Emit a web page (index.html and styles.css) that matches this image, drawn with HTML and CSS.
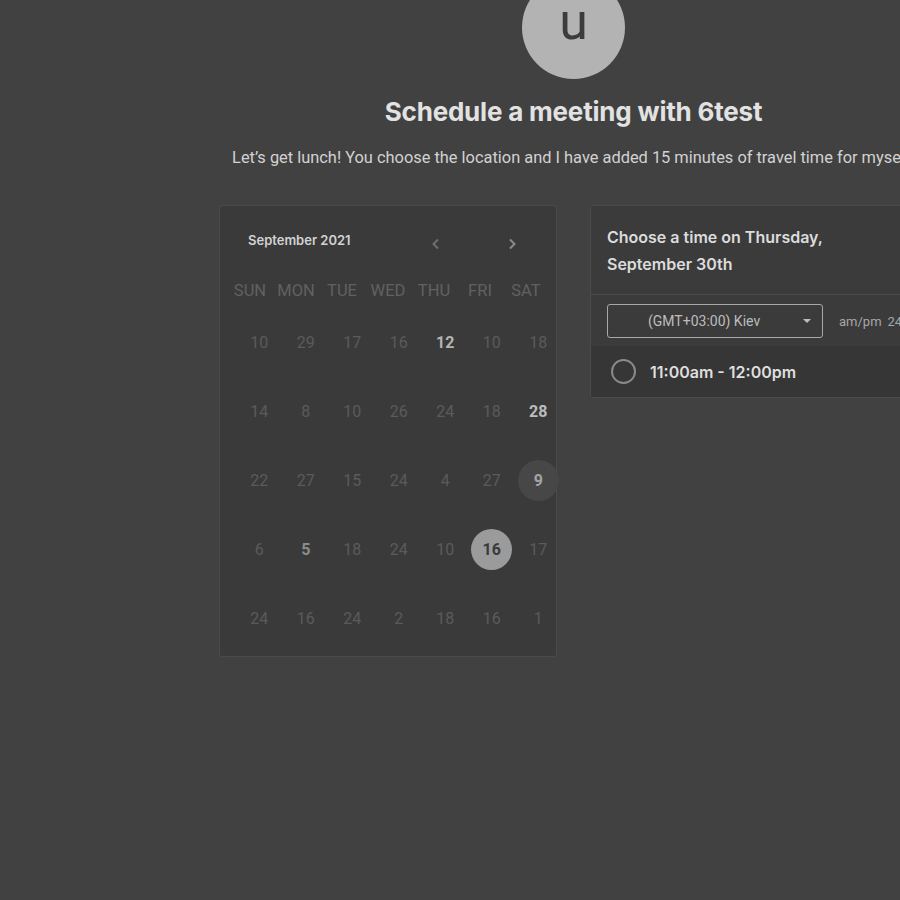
FILE: index.html
```html
<!DOCTYPE html>
<html>
<head>
<meta charset="utf-8">
<link rel="stylesheet" href="styles.css">
</head>
<body>
<div class="page">
  <div class="avatar">u</div>
  <h1 class="title">Schedule a meeting with 6test</h1>
  <p class="subtitle">Let’s get lunch! You choose the location and I have added 15 minutes of travel time for myself.</p>
  <div class="panels">
    <div class="calendar">
      <div class="cal-head">
        <span class="month">September 2021</span>
        <div class="navs">
          <svg class="nav" width="14" height="14" viewBox="0 0 14 14"><path d="M9 2.5 L4.5 7 L9 11.5" fill="none" stroke="#6e6e6e" stroke-width="2"/></svg>
          <svg class="nav" width="14" height="14" viewBox="0 0 14 14"><path d="M5 2.5 L9.5 7 L5 11.5" fill="none" stroke="#8a8a8a" stroke-width="2"/></svg>
        </div>
      </div>
      <div class="dows">
        <span>SUN</span><span>MON</span><span>TUE</span><span>WED</span><span>THU</span><span>FRI</span><span>SAT</span>
      </div>
      <div class="grid">
        <span class="d">10</span><span class="d">29</span><span class="d">17</span><span class="d">16</span><span class="d b1">12</span><span class="d">10</span><span class="d">18</span>
        <span class="d">14</span><span class="d">8</span><span class="d">10</span><span class="d">26</span><span class="d">24</span><span class="d">18</span><span class="d b2">28</span>
        <span class="d">22</span><span class="d">27</span><span class="d">15</span><span class="d">24</span><span class="d">4</span><span class="d">27</span><span class="d today"><i>9</i></span>
        <span class="d">6</span><span class="d b3">5</span><span class="d">18</span><span class="d">24</span><span class="d">10</span><span class="d sel"><i>16</i></span><span class="d">17</span>
        <span class="d">24</span><span class="d">16</span><span class="d">24</span><span class="d">2</span><span class="d">18</span><span class="d">16</span><span class="d">1</span>
      </div>
    </div>
    <div class="times">
      <div class="times-head">Choose a time on Thursday,<br>September 30th</div>
      <div class="tz-row">
        <div class="select"><span>(GMT+03:00) Kiev</span><svg class="caret" width="8" height="5" viewBox="0 0 8 5"><path d="M0 0 L8 0 L4 4 Z" fill="#bdbdbd"/></svg></div>
        <span class="fmt">am/pm</span><span class="fmt">24h</span>
      </div>
      <div class="slot">
        <span class="radio"></span>
        <span class="slot-text">11:00am - 12:00pm</span>
      </div>
    </div>
  </div>
</div>
</body>
</html>
```
FILE: styles.css
```css
html, body {
  margin: 0;
  padding: 0;
  background: #414141;
  overflow: hidden;
  height: 900px;
}
.page {
  width: 1147px;
  display: flex;
  flex-direction: column;
  align-items: center;
}
.avatar {
  width: 103px;
  height: 103px;
  border-radius: 50%;
  background: #b3b3b3;
  margin-top: -24px;
  display: flex;
  justify-content: center;
  color: #3c3c3c;
  font-family: Roboto, sans-serif;
  font-size: 52px;
  line-height: 92px;
}
.title {
  margin: 16px 0 0;
  font-family: Inter, sans-serif;
  font-weight: 700;
  font-size: 26px;
  line-height: 34px;
  color: #e2e2e2;
  letter-spacing: -0.2px;
}
.subtitle {
  margin: 18px 0 0;
  font-family: Roboto, sans-serif;
  font-size: 16.4px;
  line-height: 22px;
  color: #d2d2d2;
  white-space: nowrap;
}
.panels {
  display: flex;
  gap: 33px;
  margin-top: 36px;
  align-items: flex-start;
}
.calendar {
  width: 336px;
  height: 450px;
  background: #3a3a3a;
  border: 1px solid #4b4b4b;
  border-radius: 3px;
  box-sizing: content-box;
}
.cal-head {
  display: flex;
  align-items: center;
  height: 26px;
  margin-top: 21px;
  padding-left: 28px;
}
.month {
  font-family: Inter, sans-serif;
  font-weight: 600;
  font-size: 13px;
  color: #d2d2d2;
  width: 181px;
}
.navs {
  display: flex;
  gap: 62px;
  margin-top: 8px;
}
.nav { display: block; }
.dows {
  display: grid;
  grid-template-columns: repeat(7, 46px);
  justify-items: center;
  padding-left: 7px;
  margin-top: 27px;
  font-family: Roboto, sans-serif;
  font-size: 16.5px;
  color: #616161;
  height: 22px;
  line-height: 22px;
}
.grid {
  display: grid;
  grid-template-columns: repeat(7, 46.5px);
  grid-auto-rows: 69px;
  padding-left: 16px;
  margin-top: 6px;
}
.d {
  display: flex;
  align-items: center;
  justify-content: center;
  font-family: Roboto, sans-serif;
  font-size: 16px;
  color: #5b5b5b;
}
.d i {
  font-style: normal;
  width: 41px;
  height: 41px;
  border-radius: 50%;
  display: flex;
  align-items: center;
  justify-content: center;
  font-weight: 700;
}
.b1 { color: #b4b4b4; font-weight: 700; }
.b2 { color: #bdbdbd; font-weight: 700; }
.b3 { color: #8c8c8c; font-weight: 700; }
.today i { background: #474747; color: #a3a3a3; }
.sel i { background: #9b9b9b; color: #3a3a3a; }
.times {
  width: 336px;
  border: 1px solid #4b4b4b;
  border-radius: 3px;
  background: #3b3b3b;
}
.times-head {
  padding: 18px 16px 16px;
  font-family: Inter, sans-serif;
  font-weight: 600;
  font-size: 16px;
  line-height: 27px;
  color: #dcdcdc;
  border-bottom: 1px solid #4b4b4b;
}
.tz-row {
  display: flex;
  align-items: center;
  padding: 9px 16px 8px;
  gap: 6px;
}
.select {
  width: 216px;
  height: 34px;
  border: 1px solid #a8a8a8;
  border-radius: 3px;
  box-sizing: border-box;
  display: flex;
  align-items: center;
  position: relative;
  padding-left: 40px;
  font-family: Roboto, sans-serif;
  font-size: 14px;
  color: #bdbdbd;
  margin-right: 10px;
}
.caret {
  position: absolute;
  right: 11px;
  top: 14px;
}
.fmt {
  font-family: Roboto, sans-serif;
  font-size: 13px;
  color: #a7a7a7;
}
.slot {
  background: #363636;
  height: 51px;
  display: flex;
  align-items: center;
  padding-left: 20px;
  gap: 14px;
}
.radio {
  width: 21px;
  height: 21px;
  border: 2px solid #8a8a8a;
  border-radius: 50%;
}
.slot-text {
  font-family: Inter, sans-serif;
  font-weight: 600;
  font-size: 16px;
  color: #dedede;
}
```
